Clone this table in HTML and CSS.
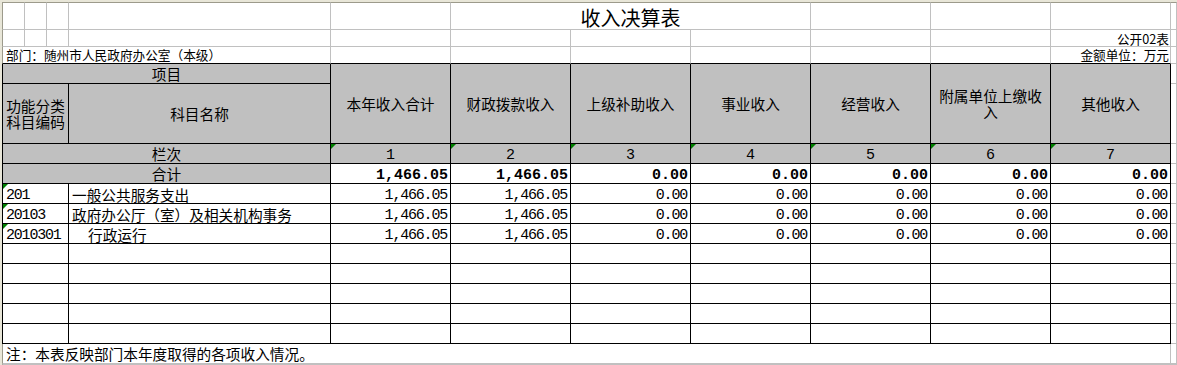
FILE: index.html
```html
<!DOCTYPE html>
<html lang="zh-CN">
<head>
<meta charset="utf-8">
<title>收入决算表</title>
<link rel="stylesheet" href="styles.css">
</head>
<body>
<div class="sheet">
  <div class="grid">
    <!-- row 0: title -->
    <div class="first top"></div>
    <div class="top"></div>
    <div class="top"></div>
    <div class="top"></div>
    <div class="top"></div>
    <div class="top title span3">收入决算表</div>
    <div class="top"></div>
    <div class="top"></div>
    <div class="top"></div>
    <div class="top"></div>

    <!-- row 1 -->
    <div class="first"></div>
    <div></div><div></div><div></div><div></div><div></div><div></div><div></div><div></div><div></div>
    <div class="small right r1">公开02表</div>
    <div></div>

    <!-- row 2 -->
    <div class="first span4 bb small dept">部门：随州市人民政府办公室（本级）</div>
    <div class="bb"></div><div class="bb"></div><div class="bb"></div><div class="bb"></div><div class="bb"></div><div class="bb"></div>
    <div class="bb small right r2">金额单位：万元</div>
    <div></div>

    <!-- rows 3-4: header -->
    <div class="first span4 b hdr">项目</div>
    <div class="b hdr rspan2">本年收入合计</div>
    <div class="b hdr rspan2">财政拨款收入</div>
    <div class="b hdr rspan2">上级补助收入</div>
    <div class="b hdr rspan2">事业收入</div>
    <div class="b hdr rspan2">经营收入</div>
    <div class="b hdr rspan2">附属单位上缴收<br>入</div>
    <div class="b hdr rspan2">其他收入</div>
    <div></div>
    <div class="first span3 b hdr">功能分类<br>科目编码</div>
    <div class="b hdr">科目名称</div>
    <div></div>

    <!-- row 5: 栏次 -->
    <div class="first span4 b hdr">栏次</div>
    <div class="b hdr idx tri">1</div>
    <div class="b hdr idx tri">2</div>
    <div class="b hdr idx tri">3</div>
    <div class="b hdr idx tri">4</div>
    <div class="b hdr idx tri">5</div>
    <div class="b hdr idx tri">6</div>
    <div class="b hdr idx tri">7</div>
    <div></div>

    <!-- row 6: 合计 -->
    <div class="first span4 b hdr">合计</div>
    <div class="b num bold">1,466.05</div>
    <div class="b num bold">1,466.05</div>
    <div class="b num bold">0.00</div>
    <div class="b num bold">0.00</div>
    <div class="b num bold">0.00</div>
    <div class="b num bold">0.00</div>
    <div class="b num bold">0.00</div>
    <div></div>

    <!-- row 7 -->
    <div class="first span3 b code tri">201</div>
    <div class="b name">一般公共服务支出</div>
    <div class="b num">1,466.05</div>
    <div class="b num">1,466.05</div>
    <div class="b num">0.00</div>
    <div class="b num">0.00</div>
    <div class="b num">0.00</div>
    <div class="b num">0.00</div>
    <div class="b num">0.00</div>
    <div></div>

    <!-- row 8 -->
    <div class="first span3 b code tri">20103</div>
    <div class="b name">政府办公厅（室）及相关机构事务</div>
    <div class="b num">1,466.05</div>
    <div class="b num">1,466.05</div>
    <div class="b num">0.00</div>
    <div class="b num">0.00</div>
    <div class="b num">0.00</div>
    <div class="b num">0.00</div>
    <div class="b num">0.00</div>
    <div></div>

    <!-- row 9 -->
    <div class="first span3 b code tri">2010301</div>
    <div class="b name indent">行政运行</div>
    <div class="b num">1,466.05</div>
    <div class="b num">1,466.05</div>
    <div class="b num">0.00</div>
    <div class="b num">0.00</div>
    <div class="b num">0.00</div>
    <div class="b num">0.00</div>
    <div class="b num">0.00</div>
    <div></div>

    <!-- rows 10-14: empty -->
    <div class="first span3 b"></div><div class="b"></div><div class="b"></div><div class="b"></div><div class="b"></div><div class="b"></div><div class="b"></div><div class="b"></div><div class="b"></div><div></div>
    <div class="first span3 b"></div><div class="b"></div><div class="b"></div><div class="b"></div><div class="b"></div><div class="b"></div><div class="b"></div><div class="b"></div><div class="b"></div><div></div>
    <div class="first span3 b"></div><div class="b"></div><div class="b"></div><div class="b"></div><div class="b"></div><div class="b"></div><div class="b"></div><div class="b"></div><div class="b"></div><div></div>
    <div class="first span3 b"></div><div class="b"></div><div class="b"></div><div class="b"></div><div class="b"></div><div class="b"></div><div class="b"></div><div class="b"></div><div class="b"></div><div></div>
    <div class="first span3 b"></div><div class="b"></div><div class="b"></div><div class="b"></div><div class="b"></div><div class="b"></div><div class="b"></div><div class="b"></div><div class="b"></div><div></div>

    <!-- row 15: note -->
    <div class="first span11 note">注：本表反映部门本年度取得的各项收入情况。</div>
    <div></div>

    <!-- row 16 -->
    <div class="first"></div>
    <div></div><div></div><div></div><div></div><div></div><div></div><div></div><div></div><div></div><div></div><div></div>
  </div>
</div>
</body>
</html>
```
FILE: styles.css
```css
html, body {
  margin: 0;
  padding: 0;
  background: #ffffff;
}

.sheet {
  box-sizing: border-box;
  height: 365px;
  padding: 2px 0 0 2px;
  background: #e8e6d8;
  overflow: hidden;
}

.grid {
  display: grid;
  grid-template-columns: 23px 22px 22px 262px repeat(7, 120px) 1fr;
  grid-template-rows: 28px 17px 17px 20px 60px repeat(11, 20px) 1fr;
  height: 363px;
  background: #ffffff;
  font-family: "Noto Sans CJK SC", "Noto Sans", sans-serif;
  font-size: 14.67px;
  line-height: 16px;
  color: #000000;
}

.grid > div {
  box-sizing: border-box;
  position: relative;
  display: flex;
  align-items: center;
  min-width: 0;
  white-space: nowrap;
  border-right: 1px solid #c0c0c0;
  border-bottom: 1px solid #c0c0c0;
}

.grid > .first { border-left: 1px solid #9c9a8b; }
.grid > .top { border-top: 1px solid #9c9a8b; }
.grid > .b { border-right-color: #000000; border-bottom-color: #000000; }
.grid > .first.b { border-left-color: #000000; }
.grid > .bb { border-bottom-color: #000000; }

.span3 { grid-column: span 3; }
.span4 { grid-column: span 4; }
.span11 { grid-column: span 11; }
.rspan2 { grid-row: span 2; }

.title {
  justify-content: center;
  font-size: 20px;
  padding-top: 3px;
}

.grid > .small {
  font-size: 12.67px;
  line-height: 13px;
  align-items: flex-start;
}

.right {
  justify-content: flex-end;
  padding-right: 1px;
}

.r1 { padding-top: 2px; }
.r2 { padding-top: 1px; }

.dept {
  padding-left: 3px;
  padding-top: 1px;
}

.hdr {
  background: #c0c0c0;
  justify-content: center;
  text-align: center;
  padding-top: 1px;
}

.grid > .idx {
  font-family: "Liberation Mono", monospace;
  font-size: 15px;
  align-items: flex-start;
  padding-top: 4px;
}

.grid > .num {
  justify-content: flex-end;
  align-items: flex-start;
  font-family: "Liberation Mono", monospace;
  font-size: 15px;
  letter-spacing: -1.2px;
  padding-right: 3px;
  padding-top: 4px;
}

.grid > .num.bold {
  font-weight: bold;
  letter-spacing: 0;
  padding-right: 2px;
}

.grid > .code {
  align-items: flex-start;
  font-family: "Liberation Mono", monospace;
  font-size: 15px;
  letter-spacing: -1.2px;
  padding-left: 3px;
  padding-top: 4px;
}

.name {
  padding-left: 3px;
  padding-top: 2px;
}

.name.indent { padding-left: 19px; }

.note {
  padding-left: 3px;
  padding-top: 1px;
}

.tri::before {
  content: "";
  position: absolute;
  left: 0;
  top: 0;
  border-top: 5px solid #008000;
  border-right: 5px solid transparent;
}
```
